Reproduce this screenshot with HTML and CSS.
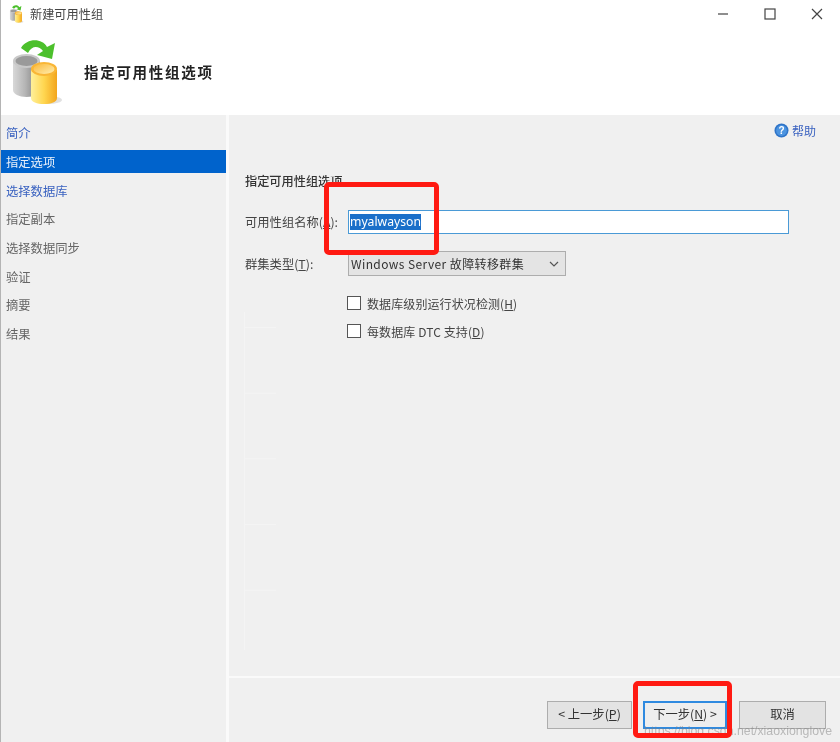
FILE: index.html
```html
<!DOCTYPE html>
<html lang="zh-CN">
<head>
<meta charset="utf-8">
<title>新建可用性组</title>
<link rel="stylesheet" href="styles.css">
</head>
<body>
<svg class="defs" width="0" height="0" aria-hidden="true">
  <defs>
    <linearGradient id="grey" x1="0" x2="1" y1="0" y2="0"><stop offset="0" stop-color="#d8d8d8"/><stop offset=".45" stop-color="#b5b5b5"/><stop offset="1" stop-color="#777"/></linearGradient>
    <linearGradient id="gold" x1="0" x2="1" y1="0" y2="0"><stop offset="0" stop-color="#fff09a"/><stop offset=".5" stop-color="#ffd650"/><stop offset="1" stop-color="#f2a51c"/></linearGradient>
    <linearGradient id="goldtop" x1="0" x2="1" y1="0" y2="1"><stop offset="0" stop-color="#fbb93a"/><stop offset="1" stop-color="#ffeeb0"/></linearGradient>
    <symbol id="db" viewBox="0 0 50 66">
      <ellipse cx="36" cy="61" rx="14" ry="4" fill="#d4d4d4" opacity=".7"/>
      <path d="M1 22v29c0 4 6 7 13.500 7S28 55 28 51V22z" fill="url(#grey)"/>
      <ellipse cx="14.500" cy="22" rx="13.500" ry="7" fill="#c9c9c9"/>
      <ellipse cx="14.500" cy="22" rx="11" ry="5" fill="#9a9a9a"/>
      <path d="M19 31v28c0 4 6 6 13 6s13-2 13-6V31z" fill="url(#gold)"/>
      <ellipse cx="32" cy="30" rx="13" ry="7" fill="#f9b636"/>
      <ellipse cx="32" cy="30" rx="10.500" ry="5" fill="url(#goldtop)"/>
      <path d="M9 9C15 -1 30 -1 35 8l8-4-3 16-15-4 6-4C27 7 20 6 16 14z" fill="#4cc02c"/>
    </symbol>
  </defs>
</svg>
<div class="window">
  <div class="titlebar">
    <svg class="app-icon" width="15" height="18"><use href="#db"/></svg>
    <span class="title-text">新建可用性组</span>
    <div class="controls">
      <svg width="12" height="12" viewBox="0 0 12 12"><path d="M1 6h10" stroke="#444" stroke-width="1.200"/></svg>
      <svg width="12" height="12" viewBox="0 0 12 12"><rect x="1" y="1" width="10" height="10" fill="none" stroke="#444" stroke-width="1.200"/></svg>
      <svg width="12" height="12" viewBox="0 0 12 12"><path d="M1 1l10 10M11 1L1 11" stroke="#444" stroke-width="1.200"/></svg>
    </div>
  </div>
  <div class="banner">
    <svg class="banner-icon" width="50" height="66"><use href="#db"/></svg>
    <h1 class="banner-title">指定可用性组选项</h1>
  </div>
  <div class="body">
    <nav class="sidebar">
      <a class="step link">简介</a>
      <a class="step current">指定选项</a>
      <a class="step link">选择数据库</a>
      <a class="step">指定副本</a>
      <a class="step">选择数据同步</a>
      <a class="step">验证</a>
      <a class="step">摘要</a>
      <a class="step">结果</a>
    </nav>
    <main class="main">
      <div class="help-row">
        <svg width="15" height="15" viewBox="0 0 15 15"><circle cx="7.500" cy="7.500" r="7" fill="#2f74c8"/><circle cx="7.500" cy="7.500" r="5.400" fill="#4c94e0"/><text x="7.500" y="11.200" class="help-mark">?</text></svg>
        <span class="help-text">帮助</span>
      </div>
      <div class="form">
        <h2 class="form-title">指定可用性组选项</h2>
        <div class="row name-row">
          <label class="label">可用性组名称(<u>A</u>):</label>
          <div class="input"><span class="selected">myalwayson</span></div>
        </div>
        <div class="row type-row">
          <label class="label">群集类型(<u>T</u>):</label>
          <div class="select">
            <span>Windows Server 故障转移群集</span>
            <svg width="10" height="6" viewBox="0 0 10 6"><path d="M1 1l4 4 4-4" fill="none" stroke="#555" stroke-width="1.200"/></svg>
          </div>
        </div>
        <div class="check first"><span class="box"></span><span>数据库级别运行状况检测(<u>H</u>)</span></div>
        <div class="check"><span class="box"></span><span>每数据库 DTC 支持(<u>D</u>)</span></div>
      </div>
      <footer class="footer">
        <button class="btn prev">&lt; 上一步(<u>P</u>)</button>
        <button class="btn next">下一步(<u>N</u>) &gt;</button>
        <button class="btn cancel">取消</button>
      </footer>
    </main>
  </div>
  <div class="ghost"></div>
  <div class="watermark">https://blog.csdn.net/xiaoxionglove</div>
  <div class="mark mark-name"></div>
  <div class="mark mark-next"></div>
</div>
</body>
</html>
```

FILE: styles.css
```css
* { box-sizing: border-box; }
html, body { margin: 0; height: 100%; }
body { background: #fff; }
.defs { position: absolute; }
.window {
  position: relative;
  width: 840px;
  height: 742px;
  display: flex;
  flex-direction: column;
  overflow: hidden;
  background: #fff;
  border-left: 1px solid #b4b4b4;
  color: #333;
  font: 12px "Noto Sans CJK SC", "Liberation Sans", sans-serif;
  filter: blur(0.35px);
}
.titlebar { height: 28px; display: flex; align-items: center; padding-left: 8px; }
.app-icon { margin-right: 6px; }
.title-text { font-size: 12.200px; color: #444; }
.controls { margin-left: auto; display: flex; gap: 35px; padding-right: 17px; }
.banner { height: 87px; display: flex; align-items: center; padding: 0 0 0 11px; }
.banner-title { margin: 0 0 0 22px; font-size: 14.500px; font-weight: 700; letter-spacing: 1.700px; color: #222; }
.body { flex: 1; display: flex; background: #f0f0f0; }
.sidebar { width: 225px; padding-top: 3.500px; display: flex; flex-direction: column; }
.step { height: 28.700px; padding-left: 5px; display: flex; align-items: center; font-size: 12.300px; color: #666; }
.step.link { color: #3a62c0; }
.step.current { height: 23px; margin: 3px 0; background: #0063cc; color: #e8f0fa; }
.main { flex: 1; display: flex; flex-direction: column; margin-left: 3px; box-shadow: -3px 0 0 #fafafa; }
.help-row { height: 30px; display: flex; align-items: center; justify-content: flex-end; gap: 3px; padding-right: 24px; }
.help-mark { font: 700 10px "Liberation Sans", sans-serif; fill: #fff; text-anchor: middle; }
.help-text { color: #3a62c0; }
.form { flex: 1; padding: 27px 0 0 16px; }
.form-title { margin: 0 0 20px; height: 18px; line-height: 18px; font-size: 12.200px; font-weight: 500; color: #333; }
.row { display: flex; align-items: center; }
.label { width: 103px; font-size: 12.300px; color: #444; white-space: nowrap; }
.input { width: 441px; height: 24px; background: #fff; border: 1px solid #4a9ad6; padding: 3px 1px; display: flex; align-items: center; }
.selected { background: #1a6fc9; color: #fff; font: 12.200px/16px "Noto Sans", "Liberation Sans", sans-serif; }
.type-row { margin-top: 17px; }
.select { width: 218px; height: 25px; background: #e4e4e4; border: 1px solid #adadad; padding: 0 6px 0 2px; display: flex; align-items: center; justify-content: space-between; letter-spacing: .4px; color: #333; }
.check { display: flex; align-items: center; gap: 6px; margin-left: 102px; height: 18px; margin-top: 10px; color: #444; letter-spacing: .1px; }
.check.first { margin-top: 18px; }
.box { width: 14px; height: 14px; background: #fff; border: 1px solid #555; }
.footer { height: 66px; border-top: 2px solid #fafafa; display: flex; align-items: flex-start; padding: 23px 0 0 318px; }
.btn { height: 28px; font: 12.300px/16px "Noto Sans CJK SC", "Liberation Sans", sans-serif; background: #e3e3e3; border: 1px solid #adadad; color: #333; padding: 0 0 3px; }
.prev { width: 85px; }
.next { width: 84px; margin-left: 11px; border: 2px solid #2f8ae0; background: #eee; }
.cancel { width: 87px; margin-left: 12px; }
.ghost { position: absolute; left: 243px; top: 312px; width: 32px; height: 338px; border-left: 1px solid #f4f4f4; background: linear-gradient(#f4f4f4 1px, transparent 1px) 0 15px / 100% 65.700px; }
.mark { position: absolute; border: 5px solid #ff1a12; border-radius: 5px; }
.mark-name { left: 323px; top: 182px; width: 115px; height: 73px; }
.mark-next { left: 632px; top: 681px; width: 99px; height: 57px; }
.watermark { position: absolute; left: 643px; top: 725px; font: 12.300px/12px "Liberation Sans", sans-serif; color: rgba(130,130,130,.5); white-space: nowrap; }
```
